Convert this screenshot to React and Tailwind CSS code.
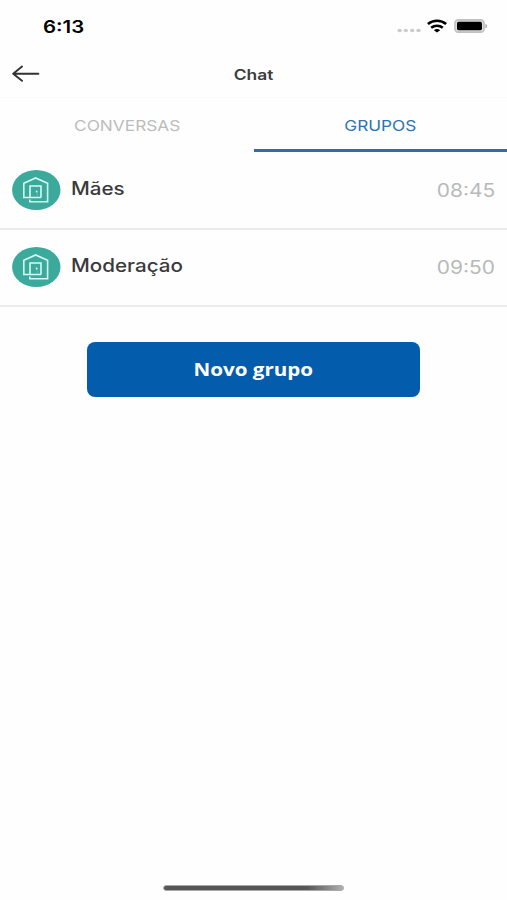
import React, { useState } from 'react';

const groups = [
  { id: 1, name: 'Mães', time: '08:45' },
  { id: 2, name: 'Moderação', time: '09:50' },
];

function StatusBar() {
  return (
    <div className="flex h-[52px] items-center justify-between pl-[43px] pr-[19px]">
      <span className="mt-[2px] origin-left scale-x-[1.2] text-[17px] font-semibold leading-none text-black">6:13</span>
      <div className="flex items-center">
        <svg className="mt-2 mr-[6px]" width="24" height="6" viewBox="0 0 24 6" fill="#cbcbcb">
          <ellipse cx="2.6" cy="3.5" rx="2.2" ry="1.8" />
          <ellipse cx="8.8" cy="3.5" rx="2.2" ry="1.8" />
          <ellipse cx="15.2" cy="3.5" rx="2.2" ry="1.8" />
          <ellipse cx="21.5" cy="3.5" rx="2.2" ry="1.8" />
        </svg>
        <svg className="mr-[7px]" width="20" height="14" viewBox="0 0 20 14" fill="none" stroke="#000" strokeWidth="2.6">
          <path d="M0.9 5.1C6 0.7 14 0.7 19.1 5.1" />
          <path d="M4.2 8.7C7.5 6 12.5 6 15.8 8.7" />
          <path d="M10 13.6L6.8 11.2C8.7 9.5 11.3 9.5 13.2 11.2Z" fill="#000" stroke="none" />
        </svg>
        <svg width="34" height="14" viewBox="0 0 34 14">
          <rect x="0.9" y="0.9" width="29.2" height="12.2" rx="3.4" fill="#ddd" stroke="#c0c0c0" strokeWidth="1.6" />
          <rect x="3" y="2.8" width="25" height="8.4" rx="1.6" fill="#000" />
          <path d="M31.4 4.9C33.6 5.3 33.6 8.7 31.4 9.1Z" fill="#aaa" />
        </svg>
      </div>
    </div>
  );
}

function Header() {
  return (
    <header className="grid h-[46px] grid-cols-3 items-center border-b border-[#fafafa] pb-[2px]">
      <button type="button" aria-label="Voltar" className="pl-3">
        <svg width="28" height="18" viewBox="0 0 28 18" fill="none" stroke="#333" strokeWidth="1.9" strokeLinecap="round" strokeLinejoin="round">
          <path d="M26.4 8.7H1.2M10 1.6L1.2 8.7L10 15.8" />
        </svg>
      </button>
      <h1 className="mt-[3px] scale-x-[1.2] text-center text-[14.5px] font-semibold leading-none text-[#3c3c3c]">Chat</h1>
    </header>
  );
}

function Tab({ label, active, onClick }) {
  return (
    <button
      type="button"
      onClick={onClick}
      className={`flex h-[54px] flex-1 items-center justify-center border-b-[3px] pt-[3px] text-[15px] leading-none ${
        active ? 'border-[#2b6eab] text-[#2b73b3]' : 'border-transparent text-[#bcbcbc]'
      }`}
    >
      <span className="scale-x-[1.15]">{label}</span>
    </button>
  );
}

function Avatar() {
  return (
    <svg width="49" height="40" viewBox="0 0 49 40" fill="none">
      <ellipse cx="24.3" cy="20" rx="24.2" ry="20" fill="#3baa9d" />
      <g stroke="#d5fbf4" strokeWidth="1.6">
        <path d="M29 27.5H11.8V13.3L23.6 7.9L35.6 13.3V31.8H17.8V29.4" />
        <path d="M18 27.5V16H29V27.5" />
        <path d="M25.3 21.2V27.3" strokeWidth="0.6" opacity="0.3" />
      </g>
      <circle cx="24.6" cy="21.5" r="0.9" fill="#d5fbf4" />
    </svg>
  );
}

function GroupRow({ name, time }) {
  return (
    <li className="flex h-[77.5px] items-center border-b-2 border-[#ebebeb] pl-[11.5px] pr-[12px]">
      <Avatar />
      <span className="ml-[10.5px] mb-[2px] origin-left scale-x-[1.145] text-[18px] font-medium leading-none text-[#3a3a3a]">{name}</span>
      <span className="ml-auto mt-[2px] origin-right scale-x-[1.165] text-[18px] leading-none text-[#b9b9b9]">{time}</span>
    </li>
  );
}

function App() {
  const [tab, setTab] = useState('grupos');

  return (
    <div className="flex h-[900px] w-[507px] flex-col overflow-hidden bg-[#fefefe] font-['Inter',sans-serif]">
      <StatusBar />
      <Header />
      <nav className="flex">
        <Tab label="CONVERSAS" active={tab === 'conversas'} onClick={() => setTab('conversas')} />
        <Tab label="GRUPOS" active={tab === 'grupos'} onClick={() => setTab('grupos')} />
      </nav>
      <ul>
        {groups.map((g) => (
          <GroupRow key={g.id} name={g.name} time={g.time} />
        ))}
      </ul>
      <button type="button" className="mx-[87px] mt-[35px] flex h-[55px] items-center justify-center rounded-lg bg-[#035dac] pb-[2px] text-white">
        <span className="scale-x-[1.145] font-['Open_Sans',sans-serif] text-[18px] font-bold leading-none">Novo grupo</span>
      </button>
      <div className="mx-auto mt-auto mb-[9px] h-[6px] w-[181px] rounded-full border border-[#a8a8a8] bg-linear-to-r from-[#565656] from-80% to-[#b0b0b0]" />
    </div>
  );
}

export default App;
